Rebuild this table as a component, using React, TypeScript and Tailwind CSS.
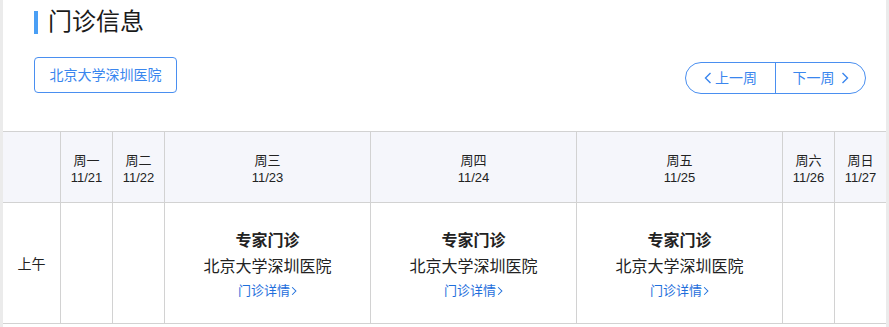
const days = [
  { w: "周一", d: "11/21", wide: false },
  { w: "周二", d: "11/22", wide: false },
  { w: "周三", d: "11/23", wide: true },
  { w: "周四", d: "11/24", wide: true },
  { w: "周五", d: "11/25", wide: true },
  { w: "周六", d: "11/26", wide: false },
  { w: "周日", d: "11/27", wide: false },
]

function Chevron({ dir, className }: { dir: "left" | "right"; className?: string }) {
  return (
    <svg viewBox="0 0 8 12" className={className} fill="none" stroke="currentColor" strokeWidth="1.4">
      {dir === "left" ? <path d="M6.5 1 L1.5 6 L6.5 11" /> : <path d="M1.5 1 L6.5 6 L1.5 11" />}
    </svg>
  )
}

export default function App() {
  const cols = "grid grid-cols-[58px_52px_52px_206px_206px_206px_52px_51px]"

  return (
    <div
      className="h-[327px] w-[889px] overflow-hidden bg-[#ebebeb] px-[3px]"
      style={{ fontFamily: '"Liberation Sans", "Noto Sans CJK SC", sans-serif' }}
    >
      <div className="h-full bg-white text-[#222]">
        <div className="flex items-center pl-[31px] pt-[8px]">
          <div className="h-[23px] w-[4px] bg-[#4a9ff5]" />
          <h1 className="ml-[10px] text-[24px] leading-[28px] text-[#1a1a1a]">门诊信息</h1>
        </div>

        <div className="mt-[21px] flex items-start justify-between pl-[31px] pr-[20px]">
          <button className="h-[36px] w-[143px] rounded-[4px] border border-[#4a8ff0] text-[14px] text-[#3a86ee]">
            北京大学深圳医院
          </button>
          <div className="mt-[5px] flex h-[32px] w-[181px] overflow-hidden rounded-full border border-[#4a8ff0] text-[14px] text-[#3a86ee]">
            <button className="flex w-[90px] items-center justify-center gap-[3px] border-r border-[#4a8ff0]">
              <Chevron dir="left" className="h-[12px] w-[8px]" />
              上一周
            </button>
            <button className="flex flex-1 items-center justify-center gap-[6px]">
              下一周
              <Chevron dir="right" className="h-[12px] w-[8px]" />
            </button>
          </div>
        </div>

        <div className="mt-[37px] border-t border-[#d2d2d2]">
          <div className={`${cols} h-[71px] border-b border-[#d2d2d2] bg-[#f5f6fb]`}>
            <div className="border-r border-[#d2d2d2]" />
            {days.map((day, i) => (
              <div
                key={day.d}
                className={`flex flex-col items-center justify-center pt-[4px] text-[13px] leading-[17px] text-[#222] ${
                  i < days.length - 1 ? "border-r border-[#d2d2d2]" : ""
                }`}
              >
                <span>{day.w}</span>
                <span>{day.d}</span>
              </div>
            ))}
          </div>

          <div className={`${cols} h-[121px] border-b border-[#d2d2d2]`}>
            <div className="flex items-center justify-center border-r border-[#d2d2d2] pt-[3px] text-[14px]">上午</div>
            {days.map((day, i) => (
              <div
                key={day.d}
                className={`flex flex-col items-center justify-center pt-[4px] ${
                  i < days.length - 1 ? "border-r border-[#d2d2d2]" : ""
                }`}
              >
                {day.wide && (
                  <>
                    <span className="text-[16px] font-bold leading-[26px] text-[#222]">专家门诊</span>
                    <span className="text-[16px] leading-[26px] text-[#222]">北京大学深圳医院</span>
                    <a className="flex items-center gap-[1px] text-[13px] leading-[22px] text-[#1f6fdc]">
                      门诊详情
                      <Chevron dir="right" className="h-[10px] w-[6px]" />
                    </a>
                  </>
                )}
              </div>
            ))}
          </div>
        </div>
      </div>
    </div>
  )
}
